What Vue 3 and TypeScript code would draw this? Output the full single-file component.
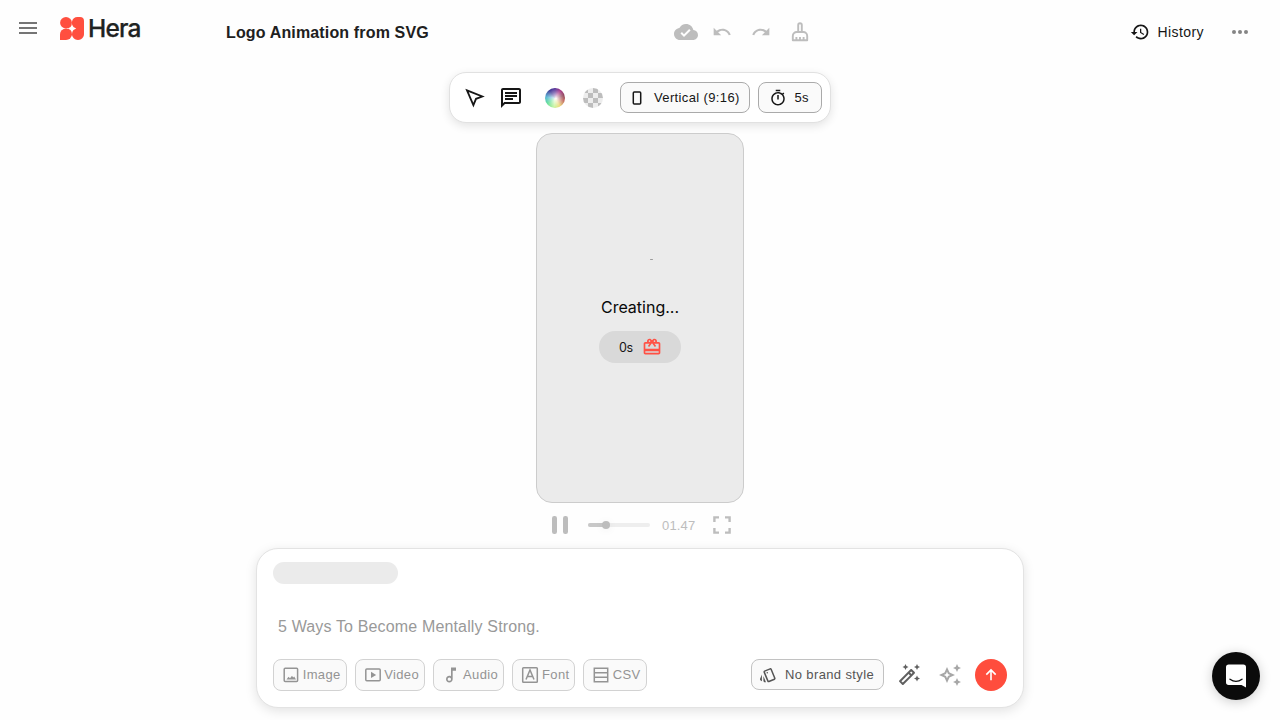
<script setup lang="ts">
interface Attachment {
  label: string
  icon: 'image' | 'video' | 'audio' | 'font' | 'csv'
  width: number
}

const attachments: Attachment[] = [
  { label: 'Image', icon: 'image', width: 73.5 },
  { label: 'Video', icon: 'video', width: 70.8 },
  { label: 'Audio', icon: 'audio', width: 71 },
  { label: 'Font', icon: 'font', width: 62.8 },
  { label: 'CSV', icon: 'csv', width: 63.7 },
]
const progress = 29
</script>

<template>
  <div class="app">
    <header class="header">
      <div class="brand">
        <svg class="menu" width="24" height="24" viewBox="0 0 24 24"><path d="M3 18h18v-2H3v2zm0-5h18v-2H3v2zm0-7v2h18V6H3z" /></svg>
        <svg class="logo" width="24" height="23" viewBox="0 0 24 24" preserveAspectRatio="none">
          <circle cx="6" cy="6" r="5.900" />
          <path d="M17.500.1h2.500a4 4 0 0 1 4 4V18a6 6 0 1 1-9-5.200v-1.600A5.900 5.900 0 0 1 17.500.1z" />
          <path d="M6 12a6 6 0 0 1 0 12H0v-6a6 6 0 0 1 6-6z" />
          <path d="M8 8h8v8H8z" />
          <path class="spark" d="M12 7.800Q12.900 11.100 16.200 12Q12.900 12.900 12 16.200Q11.100 12.900 7.800 12Q11.100 11.100 12 7.800z" />
        </svg>
        <span class="wordmark">Hera</span>
      </div>
      <h1>Logo Animation from SVG</h1>
      <div class="edit-tools">
        <svg width="24" height="24" viewBox="0 0 24 24"><path d="M19.350 10.040C18.670 6.590 15.640 4 12 4 9.110 4 6.600 5.640 5.350 8.040 2.340 8.360 0 10.910 0 14c0 3.310 2.690 6 6 6h13c2.760 0 5-2.240 5-5 0-2.640-2.050-4.780-4.650-4.960zM10 17l-3.500-3.500 1.410-1.410L10 14.170 15.180 9l1.410 1.410L10 17z" /></svg>
        <svg width="20" height="20" viewBox="0 0 24 24"><path d="M12.500 8c-2.650 0-5.050.99-6.900 2.600L2 7v9h9l-3.620-3.620c1.390-1.160 3.160-1.880 5.120-1.880 3.540 0 6.550 2.310 7.600 5.500l2.370-.78C21.080 11.030 17.150 8 12.500 8z" /></svg>
        <svg width="20" height="20" viewBox="0 0 24 24"><path d="M18.400 10.600C16.550 8.990 14.150 8 11.500 8c-4.650 0-8.580 3.030-9.960 7.220L3.900 16c1.050-3.190 4.050-5.500 7.600-5.500 1.950 0 3.730.72 5.120 1.880L13 16h9V7l-3.600 3.600z" /></svg>
        <svg class="line" width="20" height="20" viewBox="0 0 20 20"><path d="M8.200 10V3a1.800 1.800 0 0 1 3.600 0v7M2.800 18.200v-4.200a4 4 0 0 1 4-4h6.400a4 4 0 0 1 4 4v4.200zM6.400 18v-3M10 18v-3M13.600 18v-3" /></svg>
      </div>
      <div class="account">
        <svg width="20" height="20" viewBox="0 0 24 24"><path d="M13 3c-4.970 0-9 4.030-9 9H1l3.890 3.890.07.14L9 12H6c0-3.870 3.130-7 7-7s7 3.130 7 7-3.130 7-7 7c-1.930 0-3.680-.79-4.940-2.060l-1.420 1.420C8.270 19.990 10.510 21 13 21c4.970 0 9-4.030 9-9s-4.030-9-9-9zm-1 5v5l4.280 2.540.72-1.210-3.500-2.080V8H12z" /></svg>
        <span>History</span>
        <svg class="more" width="24" height="24" viewBox="0 0 24 24"><circle cx="6" cy="12" r="2" /><circle cx="12" cy="12" r="2" /><circle cx="18" cy="12" r="2" /></svg>
      </div>
    </header>

    <main class="stage">
      <div class="toolbar">
        <svg class="cursor" width="20" height="20" viewBox="0 0 20 20"><path d="M2 2.300l15.300 6.200-6.300 2.300-2.600 6.300z" /></svg>
        <svg class="chat" width="24" height="24" viewBox="0 0 24 24"><path d="M4 4h16v12H5.170L4 17.170V4m0-2c-1.100 0-1.990.9-1.990 2L2 22l4-4h14c1.100 0 2-.9 2-2V4c0-1.100-.9-2-2-2H4zm2 10h8v2H6v-2zm0-3h12v2H6V9zm0-3h12v2H6V6z" /></svg>
        <span class="wheel"></span>
        <span class="checker"></span>
        <button class="pill ratio">
          <svg width="10" height="14" viewBox="0 0 10 14"><rect x="1.300" y=".9" width="7.400" height="12.200" rx="1" fill="none" stroke="currentColor" stroke-width="1.500" /></svg>
          <span>Vertical (9:16)</span>
        </button>
        <button class="pill duration">
          <svg width="18" height="18" viewBox="0 0 24 24"><path d="M15 1H9v2h6V1zm-4 13h2V8h-2v6zm8.030-6.610 1.420-1.420c-.43-.51-.9-.99-1.410-1.410l-1.420 1.420C16.070 4.740 14.120 4 12 4c-4.970 0-9 4.030-9 9s4.020 9 9 9 9-4.030 9-9c0-2.120-.74-4.070-1.970-5.610zM12 20c-3.870 0-7-3.130-7-7s3.130-7 7-7 7 3.130 7 7-3.130 7-7 7z" /></svg>
          <span>5s</span>
        </button>
      </div>

      <section class="canvas">
        <span class="speck"></span>
        <p>Creating...</p>
        <div class="timer">
          <span>0s</span>
          <svg width="20" height="20" viewBox="0 0 24 24"><path d="M20 6h-2.180c.11-.31.18-.65.18-1 0-1.660-1.340-3-3-3-1.050 0-1.960.54-2.500 1.350l-.5.67-.5-.68C10.960 2.540 10.050 2 9 2 7.340 2 6 3.340 6 5c0 .35.07.69.18 1H4c-1.110 0-1.990.89-1.990 2L2 19c0 1.110.89 2 2 2h16c1.110 0 2-.89 2-2V8c0-1.110-.89-2-2-2zm-5-2c.55 0 1 .45 1 1s-.45 1-1 1-1-.45-1-1 .45-1 1-1zM9 4c.55 0 1 .45 1 1s-.45 1-1 1-1-.45-1-1 .45-1 1-1zm11 15H4v-2h16v2zm0-5H4V8h5.080L7 10.830 8.620 12 11 8.760l1-1.360 1 1.360L15.380 12 17 10.830 14.920 8H20v6z" /></svg>
        </div>
      </section>

      <div class="player">
        <svg width="18" height="20" viewBox="0 0 18 20"><rect x="1" y="1" width="5" height="18" rx="2.200" /><rect x="12" y="1" width="5" height="18" rx="2.200" /></svg>
        <div class="track"><div class="played" :style="{ width: progress + '%' }"><span class="thumb"></span></div></div>
        <span class="time">01.47</span>
        <svg class="expand" width="18" height="18" viewBox="0 0 18 18"><path d="M1.400 6V1.400H6M12 1.400h4.600V6M16.600 12v4.600H12M6 16.600H1.400V12" /></svg>
      </div>
    </main>

    <section class="composer">
      <div class="placeholder-chip"></div>
      <p class="prompt">5 Ways To Become Mentally Strong.</p>
      <div class="actions">
        <button v-for="item in attachments" :key="item.icon" class="attach" :style="{ width: item.width + 'px' }">
          <svg v-if="item.icon === 'image'" class="outline" width="18" height="18" viewBox="0 0 18 18"><rect x="2.200" y="2.200" width="13.400" height="13.400" rx="1" /><path class="solid" d="M4.500 13.500l2-2.700 1.500 1.400 2-2.500 1.200 1.800 1-1 1.800 3z" /></svg>
          <svg v-else-if="item.icon === 'video'" class="outline" width="18" height="18" viewBox="0 0 18 18"><rect x="1.800" y="3" width="14.400" height="11.800" rx="1" /><path class="solid" d="M7 5.700v6.400l5.200-3.200z" /></svg>
          <svg v-else-if="item.icon === 'audio'" width="18" height="18" viewBox="1.200 1.200 21.600 21.600"><path d="M12 3l.01 10.550c-.59-.34-1.270-.55-2-.55C7.790 13 6 14.790 6 17s1.790 4 4.010 4S14 19.210 14 17V7h4V3h-6zm-1.990 16c-1.100 0-2-.9-2-2s.9-2 2-2 2 .9 2 2-.9 2-2 2z" /></svg>
          <svg v-else-if="item.icon === 'font'" class="outline" width="18" height="18" viewBox="0 0 18 18"><rect x="1.700" y="1.700" width="14.600" height="14.600" rx=".8" /><path d="M5 13.500L9 4l4 9.500M6.400 10.500h5.200" /></svg>
          <svg v-else class="outline" width="18" height="18" viewBox="0 0 18 18"><path d="M2.300 2.300h13.400v13.400H2.300zM2.300 6.700h13.400M2.300 11.300h13.400" /></svg>
          <span>{{ item.label }}</span>
        </button>
        <button class="pill style-button">
          <svg width="18" height="18" viewBox="0 0 24 24"><path d="M2.530 19.650l1.340.56v-9.030l-2.430 5.860c-.41 1.020.08 2.190 1.090 2.610zm19.500-3.700L17.070 3.980c-.31-.75-1.040-1.210-1.810-1.230-.26 0-.53.04-.79.15L7.100 5.950c-.75.31-1.210 1.030-1.230 1.800-.01.27.04.54.15.8l4.960 11.970c.31.76 1.050 1.220 1.830 1.230.26 0 .52-.05.77-.15l7.360-3.050c1.020-.42 1.510-1.590 1.090-2.600zm-9.200 3.800L7.870 7.790l7.350-3.040h.01l4.950 11.950-7.350 3.050zM5.880 19.750c0 1.100.9 2 2 2h1.450l-3.450-8.340v6.340z" /><circle cx="11" cy="9" r="1" /></svg>
          <span>No brand style</span>
        </button>
        <svg class="wand" width="24" height="24" viewBox="0 0 24 24"><path d="M20 7l.94-2.060L23 4l-2.060-.94L20 1l-.94 2.060L17 4l2.060.94zM8.500 7l.94-2.060L11.500 4l-2.060-.94L8.500 1l-.94 2.060L5.500 4l2.060.94zM20 12.500l-.94 2.060-2.060.94 2.060.94.94 2.060.94-2.060L23 15.500l-2.060-.94zM17.710 9.120l-2.830-2.830C14.680 6.100 14.430 6 14.170 6c-.26 0-.51.1-.71.29L2.290 17.460c-.39.39-.39 1.020 0 1.410l2.830 2.830c.2.2.45.3.71.3s.51-.1.71-.29l11.170-11.170c.39-.39.39-1.030 0-1.420zM14.170 8.420l1.410 1.410L14.410 11 13 9.590l1.170-1.170zM5.830 19.590l-1.410-1.410L11.590 11 13 12.410l-7.170 7.180z" /></svg>
        <svg class="stars" width="24" height="24" viewBox="0 0 24 24"><path d="M19 9l1.250-2.750L23 5l-2.750-1.250L19 1l-1.250 2.750L15 5l2.750 1.250zM19 15l-1.250 2.750L15 19l2.750 1.250L19 23l1.250-2.750L23 19l-2.750-1.250zM11.500 9.500L9 4 6.500 9.500 1 12l5.500 2.500L9 20l2.500-5.500L17 12l-5.500-2.500zM9.990 12.990L9 15.170l-.99-2.180L5.830 12l2.180-.99L9 8.830l.99 2.180 2.180.99-2.180.99z" /></svg>
        <button class="send" aria-label="Send"><svg width="16" height="16" viewBox="0 0 16 16"><path d="M8 13.300V3M3.300 7.600L8 2.900l4.700 4.700" /></svg></button>
      </div>
    </section>

    <button class="help" aria-label="Open messenger">
      <svg width="22" height="24" viewBox="0 0 22 24"><path d="M3.700.5h14.600a2.700 2.700 0 0 1 2.700 2.700v20.300l-4.500-2.500H3.700A2.700 2.700 0 0 1 1 18.300V3.200A2.700 2.700 0 0 1 3.700.5z" fill="#fff" /><path d="M5 15.200q6 4.400 12 0" fill="none" stroke="#0b0b0b" stroke-width="1.400" stroke-linecap="round" /></svg>
    </button>
  </div>
</template>

<style>
body { margin: 0; background: #fff; overflow: hidden; }
</style>

<style scoped>
* { box-sizing: border-box; }
.app { width: 1280px; height: 720px; display: flex; flex-direction: column; background: #fefefe; font-family: "Liberation Sans", Arial, sans-serif; color: #161616; overflow: hidden; }
svg { display: block; flex: none; fill: currentColor; }
button { font: inherit; padding: 0; margin: 0; color: inherit; }
p, h1 { margin: 0; }
.header { height: 64px; display: flex; align-items: center; flex: none; }
.brand { width: 226px; display: flex; align-items: center; padding: 0 0 8px 16px; }
.menu { color: #757575; }
.logo { color: #ff4f3f; margin: 1px 0 0 20px; }
.spark { fill: #fff; }
.wordmark { margin: 0 0 0 4px; font: 500 24.500px/26px Inter, sans-serif; letter-spacing: -.8px; color: #202322; -webkit-text-stroke: .25px #202322; }
h1 { width: 448px; font-size: 16px; line-height: 24px; letter-spacing: .15px; padding-top: 1px; color: #202020; }
.edit-tools { width: 456px; display: flex; align-items: center; color: #bdbdbd; }
.edit-tools svg:nth-child(2) { margin-left: 14px; }
.edit-tools svg:nth-child(3) { margin-left: 19px; }
.edit-tools svg:nth-child(4) { margin-left: 19px; }
.line { fill: none; stroke: currentColor; stroke-width: 1.9; stroke-linejoin: round; }
.account { display: flex; align-items: center; font-size: 14px; letter-spacing: .4px; }
.account > span { margin-left: 7.500px; }
.more { margin-left: 24px; color: #858585; }
.stage { height: 484px; display: flex; flex-direction: column; align-items: center; flex: none; }
.toolbar { width: 382px; height: 51px; margin-top: 8px; flex: none; border: 1px solid #e1e1e1; border-radius: 17px; box-shadow: 0 3px 10px #0000001c; background: #fff; display: flex; align-items: center; padding-left: 15px; }
.cursor { fill: none; stroke: currentColor; stroke-width: 1.8; }
.chat { margin-left: 14px; }
.wheel { width: 20px; height: 20px; border-radius: 50%; margin-left: 22px; background: radial-gradient(circle at 55% 52%, #fff 0, #fffa 18%, #fff5 40%, transparent 66%), conic-gradient(from 0deg, #563398, #a32c83 35deg, #822e44 75deg, #b64d45 105deg, #e9d76a 150deg, #c6f49a 185deg, #63df9b 235deg, #5ab8d5 275deg, #423d99 325deg, #563398); }
.checker { width: 20px; height: 20px; border-radius: 50%; margin-left: 18px; background: conic-gradient(#ededed 25%, #bdbdbd 0 50%, #ededed 0 75%, #bdbdbd 0) 0 0 / 10px 10px; }
.pill { display: flex; align-items: center; height: 31px; border: 1px solid #aaa; border-radius: 8px; background: #fafafa; font-size: 13px; letter-spacing: .37px; white-space: nowrap; }
.ratio { width: 130px; margin-left: 17px; padding-left: 11px; }
.ratio span { margin-left: 12px; }
.duration { width: 64px; margin-left: 8px; padding-left: 9.500px; }
.duration span { margin-left: 8px; }
.canvas { width: 208px; height: 370px; margin-top: 10px; border: 1px solid #ccc; border-radius: 16px; background: #ebebeb; display: flex; flex-direction: column; align-items: center; flex: none; padding-top: 125px; }
.speck { width: 3px; height: 1px; margin-left: 23px; background: #9b9b9b; border-radius: 1px; flex: none; }
.canvas p { margin-top: 35px; font: 16px/24px Inter, sans-serif; color: #090909; }
.timer { display: flex; align-items: center; width: 82px; height: 32px; margin-top: 12px; padding-left: 20px; border-radius: 16px; background: #d9d9d9; font: 12.500px/20px Inter, sans-serif; letter-spacing: -.3px; }
.timer span { width: 14.500px; padding-top: 1px; }
.timer svg { color: #ff5145; margin-left: 8px; }
.player { height: 44px; width: 180px; padding-left: 1px; display: flex; align-items: center; color: #bdbdbd; flex: none; }
.track { width: 62px; height: 4px; margin-left: 19px; border-radius: 2px; background: #eee; flex: none; }
.played { height: 4px; border-radius: 2px; background: #c8c8c8; position: relative; }
.thumb { position: absolute; right: -4px; top: -2px; width: 8px; height: 8px; border-radius: 50%; background: #bdbdbd; box-shadow: 0 1px 8px #00000010; }
.time { width: 36px; margin-left: 12px; font-size: 13px; letter-spacing: .15px; flex: none; }
.expand { margin-left: 15px; fill: none; stroke: currentColor; stroke-width: 2.4; }
.composer { width: 768px; height: 160px; margin: 0 auto; padding: 12.500px 16px 0; flex: none; border: 1px solid #e3e3e3; border-radius: 22px; background: #fff; box-shadow: 0 3px 12px #0000001d; }
.placeholder-chip { width: 125px; height: 22px; border-radius: 11px; background: #ebebeb; }
.prompt { margin: 31.500px 0 0 5px; font-size: 16px; line-height: 24px; letter-spacing: .15px; color: #999; }
.actions { height: 32px; display: flex; align-items: center; margin-top: 19.500px; }
.attach { display: flex; align-items: center; height: 32px; padding-left: 8px; border: 1px solid #d2d2d2; border-radius: 8px; background: #fafafa; color: #949494; font-size: 13px; letter-spacing: .37px; }
.attach + .attach { margin-left: 8px; }
.attach span { margin-left: 2.700px; }
.outline { fill: none; stroke: currentColor; stroke-width: 1.5; }
.solid { fill: currentColor; stroke: none; }
.style-button { width: 133px; margin-left: auto; padding-left: 7px; border-color: #c2c2c2; color: #555; }
.style-button span { margin-left: 8px; }
.wand { margin-left: 13px; color: #606060; }
.stars { margin-left: 17px; color: #a7a7a7; }
.send { display: grid; place-items: center; width: 32px; height: 32px; margin-left: 13px; border: 0; border-radius: 50%; background: #ff4d3d; color: #fff; }
.send svg { fill: none; stroke: currentColor; stroke-width: 1.6; }
.help { position: absolute; left: 1212px; top: 652px; display: grid; place-items: center; width: 48px; height: 48px; border: 0; border-radius: 50%; background: #0b0b0b; box-shadow: 0 2px 12px #0003; }
</style>
